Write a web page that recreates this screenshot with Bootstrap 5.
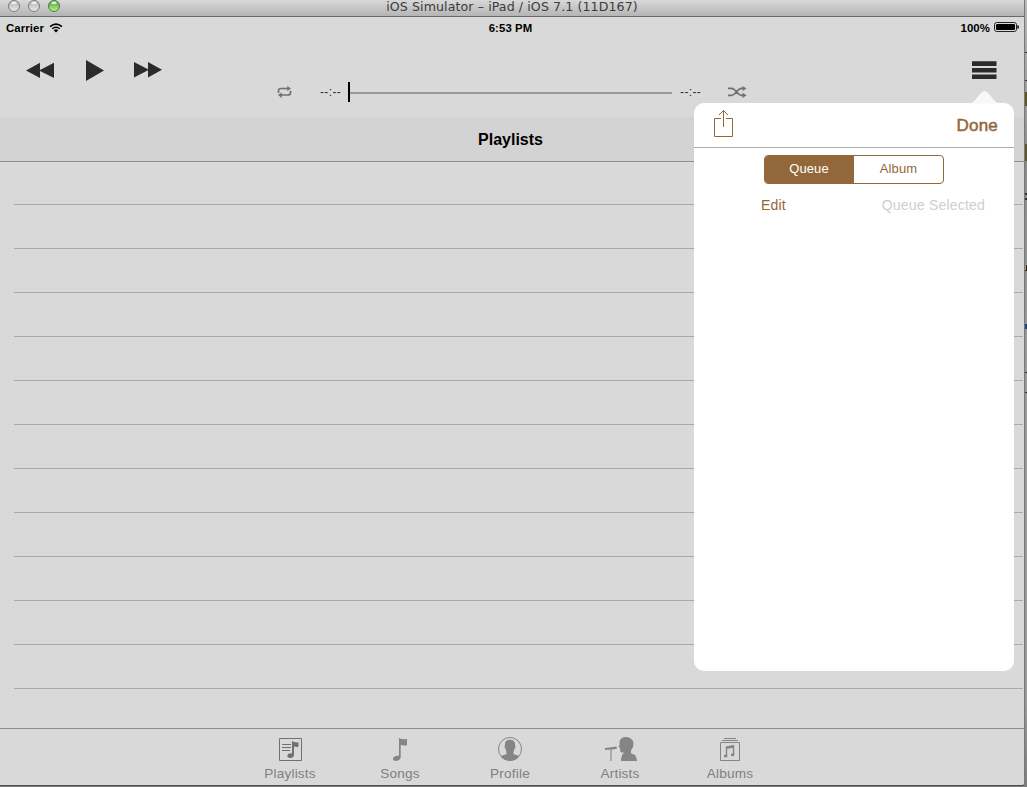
<!DOCTYPE html>
<html lang="en">
<head>
<meta charset="utf-8">
<title>iOS Simulator</title>
<link href="https://cdn.jsdelivr.net/npm/bootstrap@5.3.0/dist/css/bootstrap.min.css" rel="stylesheet">
<style>
  body { width:1027px; height:787px; background:linear-gradient(#b9b9b9,#8a8a8a 160px,#9a9a9a 380px,#999 700px,#7d7d7d); font-family:"Liberation Sans",Arial,sans-serif; color:#000; line-height:1; white-space:nowrap; }
  svg { display:block; flex:none; }
  .simwin { width:1025px; height:786px; background:#d9d9d9; border-right:1px solid #77787a; border-bottom:1px solid #505050; border-bottom-right-radius:3px; }
  .titlebar { height:17px; background:linear-gradient(#d8d8d8,#b4b4b4); border-bottom:1px solid #696969; font:12.6px/14px "DejaVu Sans",sans-serif; color:#3c3c3c; }
  .lights { left:7px; top:0; }
  .titletext { letter-spacing:.09px; }
  .statusbar { height:20px; padding:3px 5px 0 6px; font-size:11.4px; font-weight:bold; letter-spacing:.1px; }
  .statusbar > div { flex:1 1 0; }
  .midweight { -webkit-text-stroke:.5px currentColor; }
  .toolbar { height:80px; }
  .transport { padding:23px 0 0 26px; width:277px; }
  .scrub { padding-top:44px; width:470px; height:66px; font-size:12px; color:#333; }
  .clock { letter-spacing:.35px; }
  .track { width:323px; height:2px; background:#999; position:relative; margin:2px 8px 0 8px; }
  .thumb { position:absolute; left:-1px; top:-10px; width:2px; height:20px; background:#000; }
  .listhead { height:45px; background:#d3d3d3; border-bottom:1px solid #8e8e8e; font-size:16px; font-weight:bold; padding-top:1px; }
  .rows { height:566px; padding-left:14px; }
  .rows > div { height:44px; border-bottom:1px solid #a9a9ac; margin-right:1px; }
  .rows > div:first-child { height:43px; }
  .tabs { height:57px; border-top:1px solid #8e8e8e; font-size:13.6px; padding-top:6px; }
  .tabs a { width:110px; color:#808080; text-decoration:none; gap:4px; letter-spacing:.2px; }
  .pop { left:694px; top:103px; width:320px; height:568px; background:#fff; border-radius:10px; color:#92683a; }
  .arrow { left:275px; top:-14px; }
  .pophead { height:45px; border-bottom:1px solid #adadad; padding:0 16px 0 19px; font-size:17px; letter-spacing:.2px; }
  .seg { width:180px; height:29px; margin:7px 0 0 70px; border:1px solid #92683a; border-radius:4px; font-size:13px; overflow:hidden; }
  .seg > div { width:50%; padding-bottom:2px; letter-spacing:.1px; }
  .seg .on { background:#92683a; color:#fff; padding-right:1px; }
  .acts { padding:14px 29px 0 67px; font-size:14px; letter-spacing:.2px; }
  .off { color:#cecece; }
  .behind { right:0; top:0; }
</style>
</head>
<body class="position-relative overflow-hidden m-0">
<div class="simwin d-flex flex-column position-relative">
  <div class="titlebar d-flex justify-content-center position-relative flex-shrink-0">
    <svg class="lights position-absolute" width="56" height="14" viewBox="0 0 56 14">
      <defs>
        <linearGradient id="g" x2="0" y2="1"><stop stop-color="#aaa"/><stop offset="1" stop-color="#eee"/></linearGradient>
        <linearGradient id="h" x2="0" y2="1"><stop stop-color="#4e963f"/><stop offset="1" stop-color="#b9f58f"/></linearGradient>
      </defs>
      <g stroke="#7c7c7c"><circle cx="7" cy="6" r="5.5" fill="url(#g)"/><circle cx="27" cy="6" r="5.5" fill="url(#g)"/><circle cx="47" cy="6" r="5.5" fill="url(#h)" stroke="#4d7a3c"/></g>
      <g fill="#fff" opacity=".75"><ellipse cx="7" cy="2.8" rx="2.8" ry="1.5"/><ellipse cx="27" cy="2.8" rx="2.8" ry="1.5"/><ellipse cx="47" cy="2.8" rx="2.8" ry="1.5"/></g>
    </svg>
    <span class="titletext">iOS Simulator – iPad / iOS 7.1 (11D167)</span>
  </div>
  <div class="statusbar d-flex align-items-center flex-shrink-0">
    <div class="d-flex align-items-center">
      <span>Carrier</span>
      <svg style="margin:0 0 2px 5px" width="14" height="10" viewBox="0 0 14 10" fill="none" stroke="#000" stroke-width="1.5"><path d="M1 3.6Q7-1.4 13 3.6M3.2 5.8Q7 2.6 10.8 5.8"/><path d="M4.7 7.2Q7 5.4 9.3 7.2L7 9.5Z" fill="#000" stroke="none"/></svg>
    </div>
    <span class="pe-1">6:53 PM</span>
    <div class="d-flex align-items-center justify-content-end gap-1">
      <span>100%</span>
      <svg style="margin-bottom:3px" width="25" height="10" viewBox="0 0 25 10"><rect x=".5" y=".5" width="22" height="9" rx="2.2" fill="none" stroke="#222"/><rect x="2" y="2" width="19" height="6" rx="1" fill="#000"/><path d="M23.4 3Q25 3.5 25 5T23.4 7Z"/></svg>
    </div>
  </div>
  <div class="toolbar d-flex align-items-start flex-shrink-0">
    <div class="transport d-flex flex-shrink-0">
      <svg width="137" height="22" viewBox="0 0 137 22" fill="#2b2b2b"><path d="M0 10.5 14 2.7V9.9L28 2.7V18L14 11.1V18ZM60 0 78 10.5 60 21ZM108 2V17.5L122 10.2V17.5L136 9.8 122 2V9.2Z"/></svg>
    </div>
    <div class="scrub d-flex align-items-center flex-shrink-0">
      <svg width="15" height="12" viewBox="0 0 15 12" fill="none" stroke="#707070" stroke-width="1.7"><path d="M1.5 7V4.8Q1.5 2.5 4 2.5H11M13.5 4.8V6.5Q13.5 9 11 9H4"/><path d="M10.2 0 14 2.6 10.2 5ZM4.8 6.4 1 9 4.8 12Z" fill="#707070" stroke="none"/></svg>
      <span class="clock" style="margin-left:28px">--:--</span>
      <div class="track flex-shrink-0"><div class="thumb"></div></div>
      <span class="clock">--:--</span>
      <svg style="margin-left:27px" width="19" height="12" viewBox="0 0 19 12" fill="none" stroke="#707070" stroke-width="1.7"><path d="M0 2.3H3.5C8 2.3 9 9.3 13.5 9.3H16M0 9.3H3.5C8 9.3 9 2.3 13.5 2.3H16"/><path d="M14.5 0 18.5 2.4 14.5 5ZM14.5 6.8 18.5 9.3 14.5 12Z" fill="#707070" stroke="none"/></svg>
    </div>
    <svg class="ms-auto" style="margin:24px 27px 0 0" width="25" height="19" viewBox="0 0 25 19" fill="#2b2b2b"><path d="M0 .3H24.5V5H0ZM0 7H24.5V11.5H0ZM0 13.5H24.5V18H0Z"/></svg>
  </div>
  <div class="listhead d-flex align-items-center justify-content-center flex-shrink-0"><span style="padding-right:3px">Playlists</span></div>
  <div class="rows flex-shrink-0"><div></div><div></div><div></div><div></div><div></div><div></div><div></div><div></div><div></div><div></div><div></div><div></div></div>
  <nav class="tabs d-flex justify-content-center flex-shrink-0 pe-1">
    <a class="d-flex flex-column align-items-center">
      <svg width="26" height="28" viewBox="0 0 26 28" fill="none" stroke="#707070"><path d="M2.5 3.5H24.5V25.5H2.5ZM5 9.5H14M5 12.5H14M5 15.5H13"/><path d="M15 6Q18 8 21.5 7.3V11.7Q19.5 12.5 17 11.3V20Q17 22.7 13.5 23 10.5 23 10.3 20.8 10.8 18 15 18.4Z" fill="#707070" stroke="none"/></svg>Playlists</a>
    <a class="d-flex flex-column align-items-center">
      <svg width="26" height="28" viewBox="0 0 26 28" fill="#858585"><path d="M12 3Q16 5 20 3.7V10.2Q17 11 13.7 9.7V22Q13.5 25.5 9 26 6 26 6 23.3 6.7 20.4 12 20.7Z"/></svg>Songs</a>
    <a class="d-flex flex-column align-items-center">
      <svg width="26" height="28" viewBox="0 0 26 28"><circle cx="13" cy="14" r="11.5" fill="none" stroke="#858585"/><path d="M13 4.8Q18.3 5 18 9.5 19 12.5 17.3 14.5L16.6 17V19.3Q21 20.2 22.3 21.4 18.5 25.7 13 25.7 7.5 25.7 3.7 21.4 5 20.2 9.4 19.3V17L8.7 14.5Q7 12.5 8 9.5 7.7 5 13 4.8Z" fill="#858585"/></svg>Profile</a>
    <a class="d-flex flex-column align-items-center">
      <svg width="34" height="28" viewBox="-2 0 34 28" fill="#858585"><path d="M0 13.1 8 12 11.5 11.4 12 13.6 8.2 14.5 6.5 14.3V26H5.4V14.6L0 15ZM14.5 10 14.6 6Q16 2 21 2 27.5 2.4 28.5 8 28.8 12 26 15.5V18.3L30 20Q31.5 22 32 26H16Q15.8 21 19 17.5H16.4Q15 17.4 15.2 15L14.8 12.6 13.5 12Z"/></svg>Artists</a>
    <a class="d-flex flex-column align-items-center">
      <svg width="26" height="28" viewBox="0 0 26 28" fill="none" stroke="#858585"><path d="M7 3.5H19M5 5.5H21M3.5 7.5H22.5V25.5H3.5Z"/><path d="M9.5 21V12L16.5 10.5V19.5M9.5 13.4 16.5 12" stroke-width="1.4"/><ellipse cx="8.6" cy="21" rx="1.8" ry="1.5" fill="#858585" stroke="none"/><ellipse cx="15.6" cy="19.7" rx="1.8" ry="1.5" fill="#858585" stroke="none"/></svg>Albums</a>
  </nav>
  <div class="pop position-absolute">
    <svg class="arrow position-absolute" width="32" height="15" viewBox="0 0 32 15" fill="#f8f8f8"><path d="M0 14.5Q4 14 6.5 10.5L12 4Q15.5 0 19 4L24.5 10.5Q27 14 31 14.5Z"/></svg>
    <div class="pophead d-flex align-items-center justify-content-between">
      <svg class="mb-1" width="21" height="28" viewBox="0 0 21 28" fill="none" stroke="#92683a"><path d="M8 9.5H1.5V27.5H19.5V9.5H13M10.5 18V1.5M6 6 10.5 1.5 15 6"/></svg>
      <span class="midweight">Done</span>
    </div>
    <div class="seg d-flex">
      <div class="on d-flex align-items-center justify-content-center">Queue</div>
      <div class="d-flex align-items-center justify-content-center">Album</div>
    </div>
    <div class="acts d-flex justify-content-between"><span>Edit</span><span class="off">Queue Selected</span></div>
  </div>
</div>
<svg class="behind position-absolute" width="2" height="787" viewBox="0 0 2 787"><path d="M0 92h2v14H0zM0 144h2v17H0z" fill="#5c572e"/><path d="M0 52h2v1H0zM0 80h2v1H0zM0 193h2v2H0zM0 198h2v2H0zM0 372h2v1H0zM0 392h2v1H0z" fill="#333"/><path d="M1 265h1v6H0v-1h1z" fill="#3a241a"/><path d="M0 324h2v5H0z" fill="#2b426c"/></svg>
</body>
</html>
